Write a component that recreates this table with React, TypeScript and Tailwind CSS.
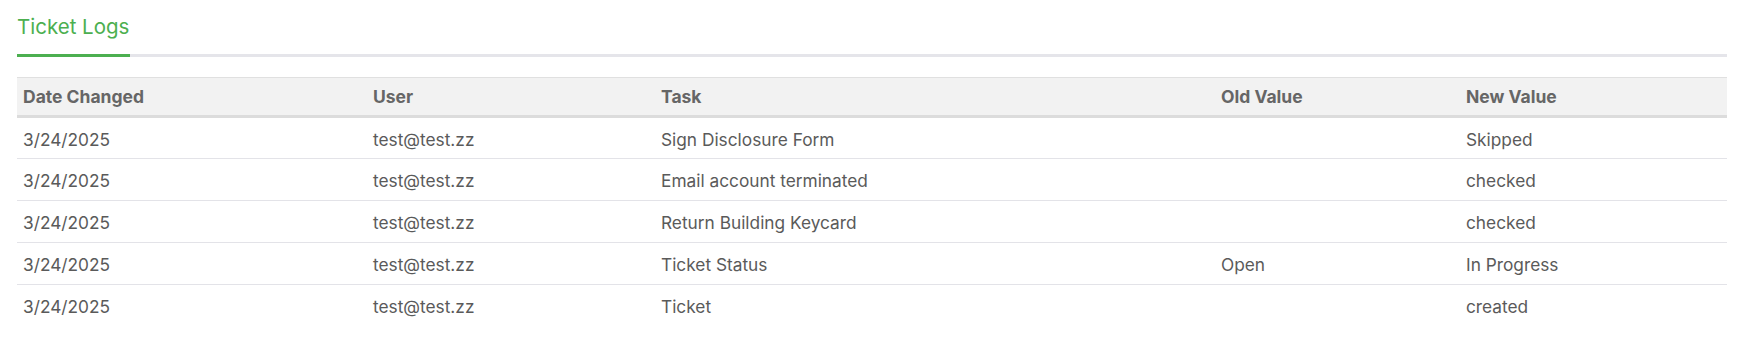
const rows = [
  { date: "3/24/2025", user: "test@test.zz", task: "Sign Disclosure Form", oldValue: "", newValue: "Skipped" },
  { date: "3/24/2025", user: "test@test.zz", task: "Email account terminated", oldValue: "", newValue: "checked" },
  { date: "3/24/2025", user: "test@test.zz", task: "Return Building Keycard", oldValue: "", newValue: "checked" },
  { date: "3/24/2025", user: "test@test.zz", task: "Ticket Status", oldValue: "Open", newValue: "In Progress" },
  { date: "3/24/2025", user: "test@test.zz", task: "Ticket", oldValue: "", newValue: "created" },
];

export default function App() {
  return (
    <div className="min-h-[346px] bg-white pl-[17px] pr-[25px] font-['Inter',sans-serif]">
      {/* tabs */}
      <div className="flex border-b-[3px] border-[#e5e5ea] pt-[10px]">
        <div className="-mb-[3px] border-b-[3px] border-[#4caf50] pb-[11px] pr-[1px] text-[20.5px] leading-[33px] text-[#4caf50]">
          Ticket Logs
        </div>
      </div>

      <table className="mt-[20px] w-full table-fixed border-collapse text-left">
        <colgroup>
          <col className="w-[350px]" />
          <col className="w-[288px]" />
          <col className="w-[560px]" />
          <col className="w-[245px]" />
          <col />
        </colgroup>
        <thead>
          <tr className="border-t border-b-[3px] border-t-[#e0e0e0] border-b-[#dcdcdc] bg-[#f2f2f2]">
            {["Date Changed", "User", "Task", "Old Value", "New Value"].map((h) => (
              <th key={h} className="h-[39px] px-[6px] pt-[2px] text-[17.5px] font-bold text-[#666666]">
                {h}
              </th>
            ))}
          </tr>
        </thead>
        <tbody>
          {rows.map((r, i) => (
            <tr key={i} className={i < rows.length - 1 ? "border-b border-[#e3e3e8]" : ""}>
              <td className="h-[42px] px-[6px] pt-[3px] text-[17.3px] text-[#5a5a5a]">{r.date}</td>
              <td className="h-[42px] px-[6px] pt-[3px] text-[17.3px] text-[#5a5a5a]">{r.user}</td>
              <td className="h-[42px] px-[6px] pt-[3px] text-[17.3px] text-[#5a5a5a]">{r.task}</td>
              <td className="h-[42px] px-[6px] pt-[3px] text-[17.3px] text-[#5a5a5a]">{r.oldValue}</td>
              <td className="h-[42px] px-[6px] pt-[3px] text-[17.3px] text-[#5a5a5a]">{r.newValue}</td>
            </tr>
          ))}
        </tbody>
      </table>
    </div>
  );
}
